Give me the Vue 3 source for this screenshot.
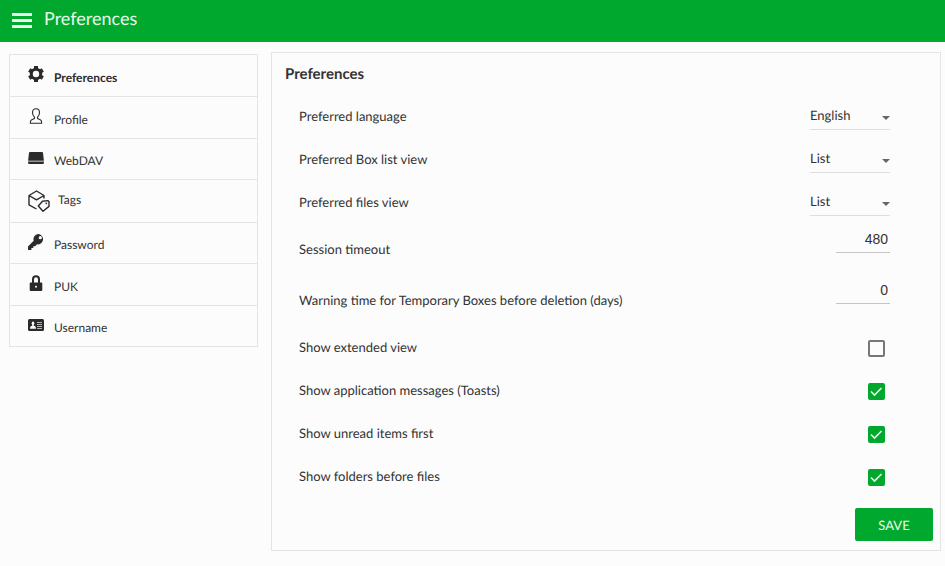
<script setup>
import { reactive } from 'vue'

const menu = [
  { label: 'Preferences', icon: 'gear' },
  { label: 'Profile', icon: 'user' },
  { label: 'WebDAV', icon: 'drive' },
  { label: 'Tags', icon: 'tags' },
  { label: 'Password', icon: 'key' },
  { label: 'PUK', icon: 'lock' },
  { label: 'Username', icon: 'card' },
]

const selects = reactive([
  { id: 'language', label: 'Preferred language', value: 'English', options: ['English', 'German'] },
  { id: 'box-view', label: 'Preferred Box list view', value: 'List', options: ['List', 'Grid'] },
  { id: 'files-view', label: 'Preferred files view', value: 'List', options: ['List', 'Grid'] },
])

const numbers = reactive([
  { id: 'timeout', label: 'Session timeout', value: '480' },
  { id: 'warning', label: 'Warning time for Temporary Boxes before deletion (days)', value: '0' },
])

const checks = reactive([
  { id: 'extended', label: 'Show extended view', value: false },
  { id: 'toasts', label: 'Show application messages (Toasts)', value: true },
  { id: 'unread', label: 'Show unread items first', value: true },
  { id: 'folders', label: 'Show folders before files', value: true },
])
</script>

<template>
  <div class="app">
    <header class="topbar">
      <button class="burger" type="button" aria-label="Menu">
        <span></span><span></span><span></span>
      </button>
      <h1>Preferences</h1>
    </header>

    <div class="content">
      <nav class="menu">
        <a
          v-for="(item, i) in menu"
          :key="item.label"
          href="#"
          class="item"
          :class="[{ active: i === 0 }, item.icon]"
        >
          <svg v-if="item.icon === 'gear'" class="icon" viewBox="0 0 16 16">
            <g fill="none" stroke="currentColor">
              <circle cx="8" cy="8" r="4.700" stroke-width="3" />
              <path
                stroke-width="4"
                d="M8 .1v3M8 15.900v-3M1.160 4.050l2.600 1.500M14.840 11.950l-2.600-1.500M1.160 11.950l2.600-1.500M14.840 4.050l-2.600 1.500"
              />
            </g>
          </svg>
          <svg v-else-if="item.icon === 'user'" class="icon" viewBox="0 0 16 16">
            <path
              fill="none"
              stroke="currentColor"
              stroke-width="1.1"
              stroke-linejoin="round"
              d="M8 .7C5.700.7 4.500 2.300 4.500 4.500c0 2 .7 3.700 2 4.700v1.300l-3.200 1.400c-.8.4-1 1.300-1 3.300h11.400c0-2-.2-2.900-1-3.300l-3.200-1.400V9.200c1.300-1 2-2.700 2-4.700C11.500 2.300 10.300.7 8 .7z"
            />
          </svg>
          <svg v-else-if="item.icon === 'drive'" class="icon" viewBox="0 0 16 16">
            <path fill="currentColor" d="M2 2h12c.6 0 .9.300 1 .8l.9 8H.1l.9-8c.1-.5.4-.8 1-.8z" />
            <path fill="currentColor" d="M.1 11.500h15.800v1.300c0 .8-.5 1.300-1.300 1.300H1.400c-.8 0-1.300-.5-1.300-1.300z" />
          </svg>
          <svg v-else-if="item.icon === 'tags'" class="icon wide" viewBox="0 0 22 22">
            <g fill="none" stroke="currentColor" stroke-width="1.4" stroke-linejoin="round">
              <path d="M1 5.500L8.500 1l7.500 4.500-7.500 4.300zM1 5.500v9.300L8.500 19M16 5.500v3" />
              <path d="M14.500 11.300l5.300-.7 1.200 1v4.800L15 21.300 10.300 16z" />
            </g>
            <circle cx="18.300" cy="13.300" r="0.900" fill="currentColor" />
          </svg>
          <svg v-else-if="item.icon === 'key'" class="icon" viewBox="0 0 16 16">
            <path
              fill="currentColor"
              fill-rule="evenodd"
              d="M10.700 0a5.200 5.200 0 0 0-5 6.700L0 12.400V16h3.400v-1.900h1.900v-1.900h1.900l1.700-1.900A5.200 5.200 0 1 0 10.700 0zM12.300 2.100a1.600 1.600 0 1 1 0 3.200 1.600 1.600 0 0 1 0-3.200z"
            />
          </svg>
          <svg v-else-if="item.icon === 'lock'" class="icon" viewBox="0 0 16 16">
            <path
              fill="currentColor"
              fill-rule="evenodd"
              d="M4 7.500V4.200a4 4 0 0 1 8 0v3.300h1.400c.5 0 .9.400.9.900v6.700c0 .5-.4.900-.9.900H2.600c-.5 0-.9-.4-.9-.9V8.400c0-.5.4-.9.900-.9zM6 7.500h4V4.200a2 2 0 0 0-4 0zM8 10.800a1 1 0 1 0 0 2 1 1 0 0 0 0-2z"
            />
          </svg>
          <svg v-else class="icon" viewBox="0 0 16 16">
            <rect x="0" y="2" width="16" height="12" rx="1.500" fill="currentColor" />
            <g fill="#fcfcfc">
              <ellipse cx="5" cy="6.200" rx="1.300" ry="1.800" />
              <path d="M2 11.700c0-2 .9-2.700 2.200-2.900V7h1.600v1.800C7.100 9 8 9.700 8 11.700z" />
            </g>
            <path fill="#b4b4b4" d="M9 5h5v1H9zM9 7h5v1H9zM9 9h5v1H9zM9 11h5v1H9z" />
          </svg>
          <span>{{ item.label }}</span>
        </a>
      </nav>

      <form class="panel" @submit.prevent>
        <h2>Preferences</h2>

        <div v-for="s in selects" :key="s.id" class="row">
          <label :for="s.id">{{ s.label }}</label>
          <div class="select">
            <select :id="s.id" v-model="s.value">
              <option v-for="o in s.options" :key="o">{{ o }}</option>
            </select>
          </div>
        </div>

        <div v-for="n in numbers" :key="n.id" class="row tall">
          <label :for="n.id">{{ n.label }}</label>
          <input :id="n.id" v-model="n.value" class="number" type="text" inputmode="numeric" />
        </div>

        <div v-for="c in checks" :key="c.id" class="row">
          <label :for="c.id">{{ c.label }}</label>
          <span class="check">
            <input :id="c.id" v-model="c.value" type="checkbox" />
            <svg v-if="c.value" viewBox="0 0 17 17">
              <path d="M3 8.500l3.500 3.500L13.500 5" fill="none" stroke="#e9f9ec" stroke-width="1.600" />
            </svg>
          </span>
        </div>

        <div class="actions">
          <button class="save" type="submit">SAVE</button>
        </div>
      </form>
    </div>
  </div>
</template>

<style>
body {
  background: #fcfcfc;
}
</style>

<style scoped>
.app {
  font-family: Lato, "Liberation Sans", sans-serif;
  font-size: 13px;
  color: #333;
  text-rendering: geometricPrecision;
}

.app * {
  box-sizing: border-box;
}

.topbar {
  display: flex;
  align-items: center;
  gap: 12px;
  height: 42px;
  padding: 0 12px 4px;
  background: #00a92d;
  color: #e9f9ec;
}

.burger {
  display: flex;
  flex-direction: column;
  gap: 3px;
  width: 20px;
  padding: 2px 0 0;
  border: 0;
  background: none;
}

.burger span {
  height: 3px;
  background: #e9f9ec;
}

h1 {
  margin: 0;
  padding-bottom: 2px;
  font-size: 18px;
  font-weight: 400;
  line-height: 24px;
}

.content {
  display: grid;
  grid-template-columns: 249px 1fr;
  align-items: start;
  gap: 13px;
  padding: 10px 4px 15px 9px;
}

.menu {
  margin-top: 2px;
  border: 1px solid #e4e4e4;
}

.item {
  display: flex;
  align-items: center;
  gap: 10px;
  height: 41px;
  padding: 0 18px;
  color: #333;
  font-size: 12px;
  text-decoration: none;
}

.item + .item {
  border-top: 1px solid #e4e4e4;
}

.item:nth-child(even) {
  height: 42px;
}

.item span {
  padding-top: 3px;
}

.item.tags {
  gap: 8px;
  height: 43px;
}

.item.tags span {
  padding: 0 0 3px;
}

.active {
  font-weight: 700;
  color: #2b2b2b;
}

.icon {
  flex: none;
  width: 16px;
  height: 16px;
  margin-bottom: 3px;
  color: #2b2b2b;
}

.icon.wide {
  width: 22px;
  height: 22px;
  margin: 0;
}

.panel {
  padding: 9px 7px 9px 13px;
  border: 1px solid #e4e4e4;
}

h2 {
  margin: 0 0 8px;
  font-size: 15px;
  font-weight: 700;
  line-height: 24px;
}

.row {
  display: flex;
  align-items: center;
  justify-content: space-between;
  height: 43px;
  padding: 0 43px 0 14px;
}

.row.tall {
  height: 51px;
}

.select {
  display: flex;
  align-items: center;
  position: relative;
  width: 80px;
  height: 29px;
  border-bottom: 1px solid #dedede;
}

.select::after {
  content: "";
  position: absolute;
  right: 0;
  top: 15px;
  border: 4px solid transparent;
  border-top-color: #666;
  border-bottom: 0;
  pointer-events: none;
}

select {
  width: 100%;
  padding: 0;
  border: 0;
  appearance: none;
  background: none;
  color: inherit;
  font: inherit;
  text-rendering: inherit;
}

.number {
  align-self: flex-start;
  width: 54px;
  height: 25px;
  margin-top: 5px;
  padding: 0 2px 2px;
  border: 0;
  border-bottom: 1px solid #c4c4c4;
  background: none;
  color: #333;
  font-family: "Liberation Sans", sans-serif;
  font-size: 14px;
  text-align: right;
}

.check {
  position: relative;
  width: 17px;
  height: 17px;
  margin: 4px 5px 0 0;
}

.check input {
  display: block;
  width: 17px;
  height: 17px;
  margin: 0;
  border: 2px solid #777;
  border-radius: 2px;
  appearance: none;
}

.check input:checked {
  border-color: #00a92d;
  background: #00a92d;
}

.check svg {
  position: absolute;
  inset: 0;
  pointer-events: none;
}

.actions {
  display: flex;
  justify-content: flex-end;
  margin-top: 11px;
}

.save {
  width: 78px;
  height: 33px;
  border: 0;
  border-radius: 2px;
  background: #00a92d;
  color: #e9f9ec;
  font: inherit;
  text-rendering: inherit;
}
</style>
